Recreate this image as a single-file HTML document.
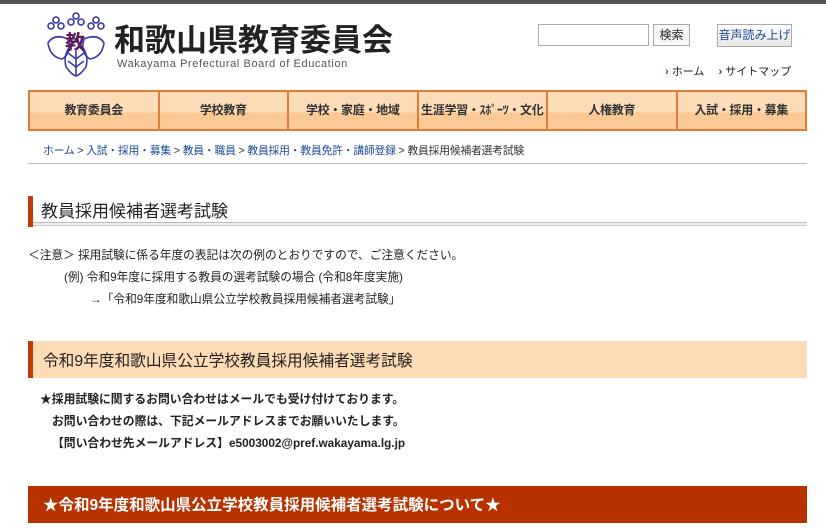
<!DOCTYPE html>
<html><head><meta charset="utf-8"><style>
*{margin:0;padding:0;box-sizing:border-box}
body{width:826px;height:532px;overflow:hidden;background:#fff;font-family:"Liberation Sans","Noto Sans CJK JP",sans-serif;color:#222;position:relative}
.a{position:absolute}
.nav{left:28px;top:90px;width:779px;height:41px;border:2px solid #e07b3a;display:flex;background:linear-gradient(#fddcb8 0,#fddcb8 55%,#fbc996 56%,#fbc996 100%)}
.nav div{flex:1;border-left:2px solid #e07b3a;text-align:center;line-height:37px;font-size:12px;font-weight:bold;color:#333;white-space:nowrap;letter-spacing:-0.3px}
.nav div:first-child{border-left:none}
.bc{left:43px;top:142px;font-size:10.8px;color:#333;white-space:nowrap;letter-spacing:-0.2px}
.bc span{color:#1a4a99}
p.t{position:absolute;font-size:11.7px;white-space:nowrap}
p.b{position:absolute;font-size:11.8px;font-weight:bold;white-space:nowrap;left:40px}
</style></head><body>
<div class="a" style="left:0;top:0;width:826px;height:4px;background:#555"></div>
<svg class="a" style="left:44px;top:11px" width="64" height="66" viewBox="0 0 64 66">
<g fill="none" stroke="#3a3aa8" stroke-width="1.6">
<circle cx="32" cy="5" r="3"/><circle cx="27" cy="11" r="3"/><circle cx="37" cy="11" r="3"/>
<circle cx="12" cy="9" r="3"/><circle cx="7" cy="15" r="3"/><circle cx="17" cy="15" r="3"/>
<circle cx="52" cy="9" r="3"/><circle cx="47" cy="15" r="3"/><circle cx="57" cy="15" r="3"/>
<path d="M4 32 Q10 22 24 28 Q28 42 18 48 Q6 46 4 32Z"/><path d="M60 32 Q54 22 40 28 Q36 42 46 48 Q58 46 60 32Z"/>
<path d="M32 30 Q46 40 42 56 Q36 64 32 65 Q28 64 22 56 Q18 40 32 30Z"/><path d="M32 40 V64 M32 48 L24 42 M32 48 L40 42 M32 56 L24 50 M32 56 L40 50"/>
</g>
<text x="21" y="38" font-size="20" font-weight="bold" fill="#5a1a5a" font-family="Noto Sans CJK JP">教</text>
</svg>
<div class="a" style="left:114px;top:15px;font-size:31px;font-weight:bold;color:#222;white-space:nowrap">和歌山県教育委員会</div>
<div class="a" style="left:117px;top:58px;font-size:11px;color:#555;letter-spacing:.6px;white-space:nowrap">Wakayama Prefectural Board of Education</div>
<div class="a" style="left:538px;top:24px;width:111px;height:22px;border:1px solid #aaa"></div>
<div class="a" style="left:653px;top:24px;width:37px;height:22px;border:1px solid #aaa;font-size:12px;line-height:20px;text-align:center;background:#f7f7f7">検索</div>
<div class="a" style="left:717px;top:24px;width:75px;height:23px;border:1px solid #aaa;font-size:12px;line-height:21px;text-align:center;background:linear-gradient(#fff,#e6e6e6);color:#1a4a99">音声読み上げ</div>
<div class="a" style="left:665px;top:63px;font-size:11px;white-space:nowrap"><b style="color:#1a4a99">›</b> ホーム　 <b style="color:#1a4a99">›</b> サイトマップ</div>
<div class="a nav"><div>教育委員会</div><div>学校教育</div><div>学校・家庭・地域</div><div>生涯学習・ｽﾎﾟｰﾂ・文化</div><div>人権教育</div><div>入試・採用・募集</div></div>
<div class="a bc"><span>ホーム</span> &gt; <span>入試・採用・募集</span> &gt; <span>教員・職員</span> &gt; <span>教員採用・教員免許・講師登録</span> &gt; 教員採用候補者選考試験</div>
<div class="a" style="left:28px;top:163px;width:779px;height:1px;background:#bbb"></div>
<div class="a" style="left:28px;top:196px;width:5px;height:31px;background:#c03a0a"></div>
<div class="a" style="left:33px;top:222px;width:774px;height:4px;border-top:1px solid #bbb;border-bottom:1px solid #ccc;background:#eee"></div>
<div class="a" style="left:41px;top:197px;font-size:17px;white-space:nowrap">教員採用候補者選考試験</div>
<p class="t" style="left:28px;top:246px">＜注意＞ 採用試験に係る年度の表記は次の例のとおりですので、ご注意ください。</p>
<p class="t" style="left:64px;top:268px">(例) 令和9年度に採用する教員の選考試験の場合 (令和8年度実施)</p>
<p class="t" style="left:90px;top:290px">→「令和9年度和歌山県公立学校教員採用候補者選考試験」</p>
<div class="a" style="left:28px;top:341px;width:779px;height:37px;background:#fddcb5;border-left:5px solid #c03a0a"></div>
<div class="a" style="left:43px;top:348px;font-size:15.7px;white-space:nowrap">令和9年度和歌山県公立学校教員採用候補者選考試験</div>
<p class="b" style="top:390px">★採用試験に関するお問い合わせはメールでも受け付けております。</p>
<p class="b" style="left:52px;top:412px">お問い合わせの際は、下記メールアドレスまでお願いいたします。</p>
<p class="b" style="left:52px;top:434px">【問い合わせ先メールアドレス】e5003002@pref.wakayama.lg.jp</p>
<div class="a" style="left:28px;top:486px;width:779px;height:37px;background:#b83200"></div>
<div class="a" style="left:43px;top:493px;font-size:15.5px;font-weight:bold;color:#fff;white-space:nowrap">★令和9年度和歌山県公立学校教員採用候補者選考試験について★</div>
</body></html>
